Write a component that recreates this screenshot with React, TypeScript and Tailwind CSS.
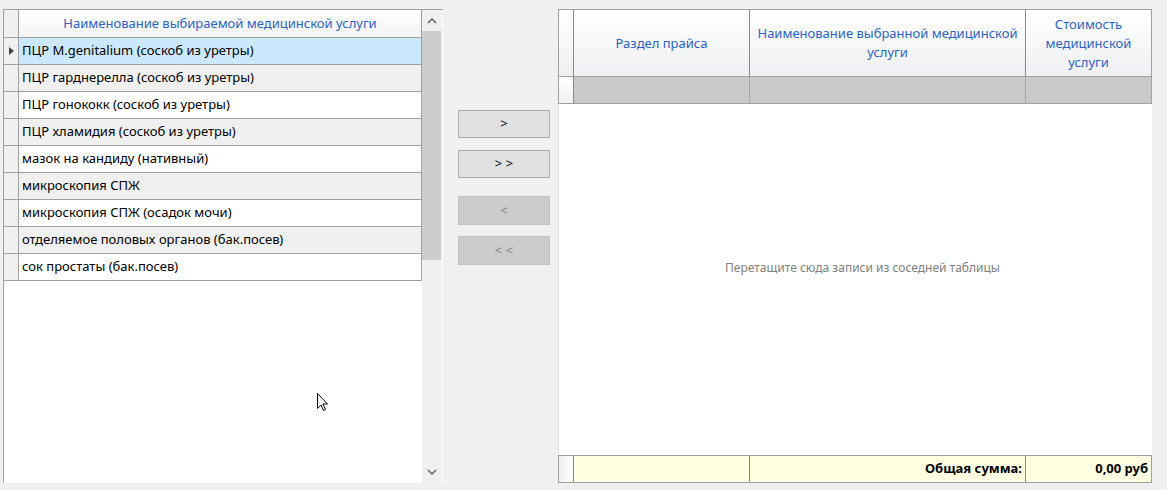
const leftRows = [
  "ПЦР M.genitalium (соскоб из уретры)",
  "ПЦР гарднерелла (соскоб из уретры)",
  "ПЦР гонококк (соскоб из уретры)",
  "ПЦР хламидия (соскоб из уретры)",
  "мазок на кандиду (нативный)",
  "микроскопия СПЖ",
  "микроскопия СПЖ (осадок мочи)",
  "отделяемое половых органов (бак.посев)",
  "сок простаты (бак.посев)",
];

const Chevron = ({ up }: { up?: boolean }) => (
  <svg width="10" height="6" viewBox="0 0 10 6">
    <polyline
      points={up ? "1,5 5,1 9,5" : "1,1 5,5 9,1"}
      fill="none"
      stroke="#606060"
      strokeWidth="1.5"
    />
  </svg>
);

const LeftGrid = () => {
  return (
    <div className="mt-[9px] ml-[3px] w-[440px] h-[474px] flex border-t border-l border-[#a0a0a0] bg-white">
      <div className="flex-1 flex flex-col">
        {/* header */}
        <div className="flex h-[28px] border-b border-[#a0a0a0]">
          <div className="w-[15px] bg-[#f0f0f0] border-r border-[#a0a0a0]" />
          <div className="flex-1 flex items-center justify-center text-[#2b63c6] bg-gradient-to-b from-white to-[#f3f3f3] border-r border-[#a0a0a0]">
            Наименование выбираемой медицинской услуги
          </div>
        </div>
        {leftRows.map((r, i) => (
          <div key={r} className="flex h-[27px] border-b border-[#a0a0a0]">
            <div className="w-[15px] bg-[#f0f0f0] border-r border-[#a0a0a0] flex items-center justify-center">
              {i === 0 && (
                <svg width="5" height="8" viewBox="0 0 5 8">
                  <polygon points="0,0 5,4 0,8" fill="#404040" />
                </svg>
              )}
            </div>
            <div
              className={
                "flex-1 flex items-center pl-[3px] border-r border-[#a0a0a0] " +
                (i === 0 ? "bg-[#cce8ff]" : i % 2 === 1 ? "bg-[#f0f0f0]" : "bg-white")
              }
            >
              {r}
            </div>
          </div>
        ))}
      </div>
      {/* scrollbar */}
      <div className="w-[21px] bg-[#f0f0f0] flex flex-col border-r border-white">
        <div className="h-[21px] flex items-center justify-center">
          <Chevron up />
        </div>
        <div className="h-[229px] bg-[#cdcdcd] mr-[1px]" />
        <div className="flex-1" />
        <div className="h-[22px] flex items-center justify-center">
          <Chevron />
        </div>
      </div>
    </div>
  );
};

const Btn = ({ label, disabled, h }: { label: string; disabled?: boolean; h: string }) => (
  <button
    className={
      "w-[92px] flex items-center justify-center border " +
      h +
      (disabled
        ? " bg-[#cccccc] border-[#bfbfbf] text-[#838383]"
        : " bg-[#e1e1e1] border-[#adadad] text-black")
    }
  >
    {label}
  </button>
);

const RightGrid = () => {
  return (
    <div className="mt-[9px] w-[594px] h-[474px] flex flex-col">
      {/* header */}
      <div className="flex h-[68px] border border-[#a0a0a0] text-[#2b63c6] bg-gradient-to-b from-white to-[#eef0f3] leading-[19px]">
        <div className="w-[15px] bg-gradient-to-b from-white to-[#f0f0f0] border-r border-[#8a8a8a]" />
        <div className="w-[176px] flex items-center justify-center border-r border-[#8a8a8a]">
          Раздел прайса
        </div>
        <div className="w-[276px] flex items-center justify-center text-center border-r border-[#8a8a8a]">
          Наименование выбранной медицинской
          <br />
          услуги
        </div>
        <div className="flex-1 flex items-center justify-center text-center">
          Стоимость
          <br />
          медицинской
          <br />
          услуги
        </div>
      </div>
      {/* new row */}
      <div className="flex h-[27px] border-x border-b border-[#a0a0a0]">
        <div className="w-[15px] bg-gradient-to-b from-white to-[#f0f0f0] border-r border-[#8a8a8a]" />
        <div className="w-[176px] bg-[#c9c9c9] border-r border-[#a8a8a8]" />
        <div className="w-[276px] bg-[#c9c9c9] border-r border-[#a8a8a8]" />
        <div className="flex-1 bg-[#c9c9c9]" />
      </div>
      {/* body */}
      <div className="flex-1 flex bg-white border-l border-[#e0e0e0]">
        <div className="w-[14px]" />
        <div className="flex-1 flex items-center justify-center text-[12px] text-[#808080] mb-[24px]">
          Перетащите сюда записи из соседней таблицы
        </div>
      </div>
      {/* footer */}
      <div className="flex h-[28px] border border-[#a0a0a0] bg-[#ffffe1] font-bold">
        <div className="w-[15px] bg-gradient-to-r from-[#f0f0f0] to-white border-r border-[#8a8a8a]" />
        <div className="w-[176px] border-r border-[#8a8a8a]" />
        <div className="w-[276px] flex items-center justify-end pr-[3px] border-r border-[#8a8a8a]">
          Общая сумма:
        </div>
        <div className="flex-1 flex items-center justify-end pr-[3px]">0,00 руб</div>
      </div>
    </div>
  );
};

export default function App() {
  return (
    <div
      className="relative w-[1167px] h-[490px] bg-[#f0f0f0] flex text-[13px] text-black"
      style={{ fontFamily: '"Noto Sans", "Open Sans", sans-serif' }}
    >
      <LeftGrid />
      <div className="w-[115px] flex flex-col items-center pl-[7px]">
        <div className="mt-[110px]">
          <Btn label=">" h="h-[28px]" />
        </div>
        <div className="mt-[12px]">
          <Btn label="> >" h="h-[28px]" />
        </div>
        <div className="mt-[18px]">
          <Btn label="<" disabled h="h-[29px]" />
        </div>
        <div className="mt-[11px]">
          <Btn label="< <" disabled h="h-[29px]" />
        </div>
      </div>
      <RightGrid />
      {/* mouse cursor */}
      <svg className="absolute left-[317px] top-[393px]" width="12" height="19" viewBox="0 0 12 19">
        <path
          d="M0.5 0.5 L0.5 15.5 L4 12 L6.5 17.5 L8.5 16.5 L6 11 L10.5 11 Z"
          fill="white"
          stroke="black"
          strokeWidth="1"
        />
      </svg>
    </div>
  );
}
